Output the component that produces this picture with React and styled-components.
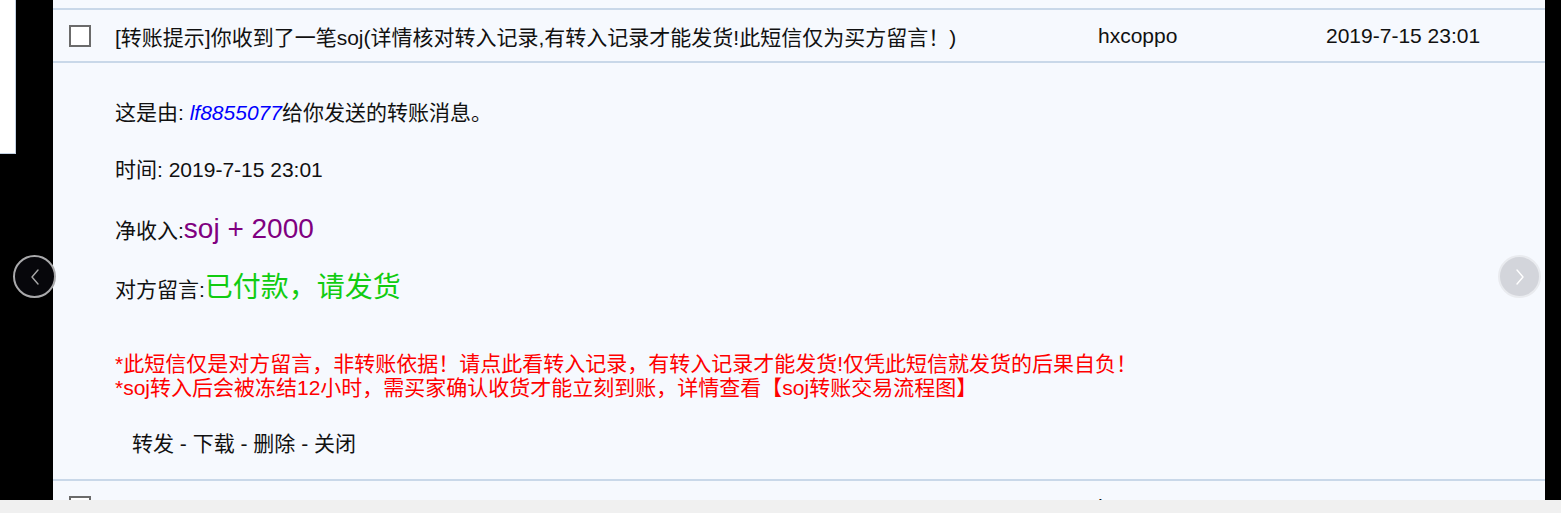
import React from "react";
import styled, { createGlobalStyle } from "styled-components";

const Global = createGlobalStyle`
  html, body { margin: 0; padding: 0; background: #f0f0f0; overflow: hidden; }
  body { font-family: "Liberation Sans", Arial, "Noto Sans CJK SC", sans-serif; }
`;

const Screen = styled.div`
  position: relative;
  display: flex;
  height: 500px;
  background: #000;
  overflow: hidden;
`;

const LeftGutter = styled.div`
  flex: none;
  width: 53px;
`;

const SidePanel = styled.div`
  width: 15px;
  height: 153px;
  background: #fff;
  border-right: 1px solid #c3d1e2;
  border-bottom: 1px solid #c3d1e2;
`;

const RightGutter = styled.div`
  flex: none;
  width: 16px;
`;

const Main = styled.div`
  flex: 1;
  min-width: 0;
  background: #f6f9fe;
  padding-top: 8px;
  overflow: hidden;
`;

const List = styled.div`
  border-top: 2px solid #c9d8e9;
`;

const Row = styled.div`
  display: flex;
  align-items: center;
  height: 51px;
  border-bottom: 2px solid #c9d8e9;
  font-size: 21px;
  color: #111;
`;

const Check = styled.span`
  flex: none;
  box-sizing: border-box;
  width: 22px;
  height: 22px;
  margin: 0 24px 0 16px;
  background: #fff;
  border: 2px solid #6b6b6b;
`;

const Subject = styled.div`
  flex: 1;
  white-space: nowrap;
  overflow: hidden;
`;

const Sender = styled.div`
  flex: none;
  width: 228px;
`;

const DateCell = styled.div`
  flex: none;
  width: 219px;
  white-space: nowrap;
`;

const Detail = styled.div`
  box-sizing: border-box;
  height: 418px;
  padding: 38px 0 0 62px;
  border-bottom: 2px solid #c9d8e9;
  font-size: 21px;
  color: #111;
`;

const Line = styled.div`
  line-height: ${(p) => p.$lh || 24}px;
  margin-top: ${(p) => p.$mt || 0}px;
  white-space: nowrap;
`;

const Sender2 = styled.span`
  color: #0000ff;
  font-style: italic;
`;

const Amount = styled.span`
  color: #800080;
  font-size: 28px;
`;

const Note = styled.span`
  color: #11cc11;
  font-size: 28px;
`;

const Warning = styled.div`
  margin-top: 46px;
  color: #ff0000;
  line-height: 24px;
  white-space: nowrap;
`;

const Actions = styled.div`
  margin: 32px 0 0 17px;
  line-height: 24px;
`;

const Arrow = styled.div`
  position: absolute;
  top: 255px;
  left: ${(p) => p.$left}px;
  box-sizing: border-box;
  width: 43px;
  height: 43px;
  border-radius: 50%;
  display: flex;
  align-items: center;
  justify-content: center;
  background: ${(p) => (p.$dark ? "#07070b" : "#d3d5db")};
  border: 2px solid ${(p) => (p.$dark ? "#a9a9ab" : "#e9ebef")};
  color: ${(p) => (p.$dark ? "#a8a8a8" : "#ffffff")};
`;

const Footer = styled.div`
  height: 13px;
  background: #f0f0f0;
`;

const subject =
  "[转账提示]你收到了一笔soj(详情核对转入记录,有转入记录才能发货!此短信仅为买方留言！)";

function Chevron({ dir }) {
  return (
    <svg width="12" height="18" viewBox="0 0 12 18" fill="none">
      <polyline
        points={dir === "left" ? "9,2 3,9 9,16" : "3,2 9,9 3,16"}
        stroke="currentColor"
        strokeWidth="1.4"
        strokeLinecap="round"
        strokeLinejoin="round"
      />
    </svg>
  );
}

export default function App() {
  return (
    <>
      <Global />
      <Screen>
        <LeftGutter>
          <SidePanel />
        </LeftGutter>
        <Main>
          <List>
            <Row>
              <Check />
              <Subject>{subject}</Subject>
              <Sender>hxcoppo</Sender>
              <DateCell>2019-7-15 23:01</DateCell>
            </Row>
            <Detail>
              <Line>
                这是由: <Sender2>lf8855077</Sender2>给你发送的转账消息。
              </Line>
              <Line $mt={33}>时间: 2019-7-15 23:01</Line>
              <Line $mt={32} $lh={30}>
                净收入:<Amount>soj + 2000</Amount>
              </Line>
              <Line $mt={26} $lh={32}>
                对方留言:<Note>已付款，请发货</Note>
              </Line>
              <Warning>
                *此短信仅是对方留言，非转账依据！请点此看转入记录，有转入记录才能发货!仅凭此短信就发货的后果自负！
                <br />
                *soj转入后会被冻结12小时，需买家确认收货才能立刻到账，详情查看【soj转账交易流程图】
              </Warning>
              <Actions>转发 - 下载 - 删除 - 关闭</Actions>
            </Detail>
            <Row>
              <Check />
              <Subject />
              <Sender>hxcoppo</Sender>
              <DateCell>2019-7-15 23:01</DateCell>
            </Row>
          </List>
        </Main>
        <RightGutter />
        <Arrow $left={13} $dark>
          <Chevron dir="left" />
        </Arrow>
        <Arrow $left={1498}>
          <Chevron dir="right" />
        </Arrow>
      </Screen>
      <Footer />
    </>
  );
}
